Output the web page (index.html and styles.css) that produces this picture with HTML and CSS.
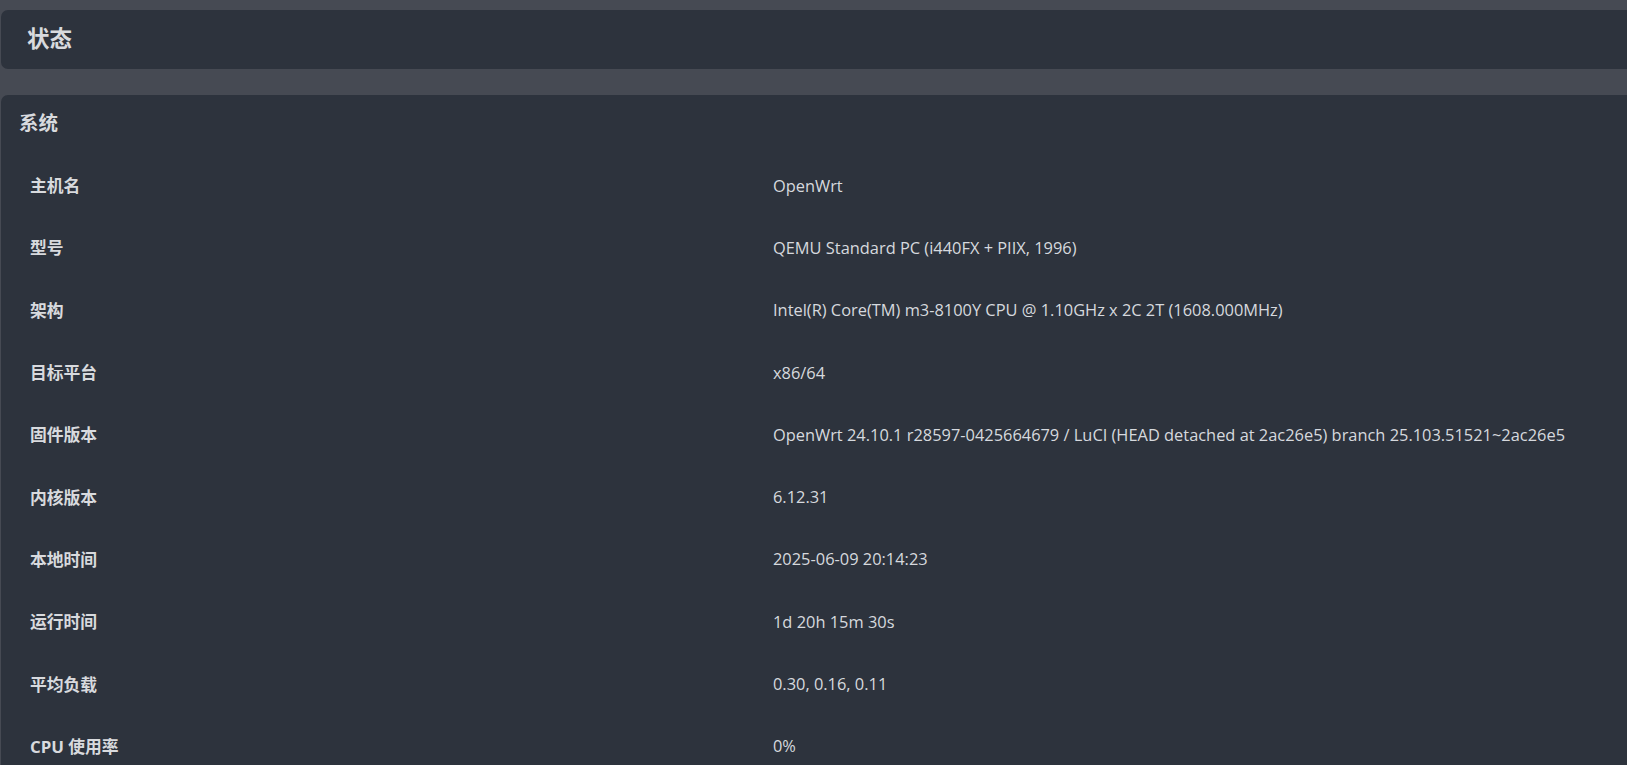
FILE: index.html
```html
<!DOCTYPE html>
<html lang="zh-CN">
<head>
<meta charset="utf-8">
<title>状态</title>
<link rel="stylesheet" href="styles.css">
</head>
<body>
<div class="page">
  <header class="title-card">
    <h2 class="title">状态</h2>
  </header>
  <section class="card">
    <h3 class="card-title">系统</h3>
    <div class="table">
      <div class="row"><div class="label">主机名</div><div class="value">OpenWrt</div></div>
      <div class="row"><div class="label">型号</div><div class="value">QEMU Standard PC (i440FX + PIIX, 1996)</div></div>
      <div class="row"><div class="label">架构</div><div class="value">Intel(R) Core(TM) m3-8100Y CPU @ 1.10GHz x 2C 2T (1608.000MHz)</div></div>
      <div class="row"><div class="label">目标平台</div><div class="value">x86/64</div></div>
      <div class="row"><div class="label">固件版本</div><div class="value">OpenWrt 24.10.1 r28597-0425664679 / LuCI (HEAD detached at 2ac26e5) branch 25.103.51521~2ac26e5</div></div>
      <div class="row"><div class="label">内核版本</div><div class="value">6.12.31</div></div>
      <div class="row"><div class="label">本地时间</div><div class="value">2025-06-09 20:14:23</div></div>
      <div class="row"><div class="label">运行时间</div><div class="value">1d 20h 15m 30s</div></div>
      <div class="row"><div class="label">平均负载</div><div class="value">0.30, 0.16, 0.11</div></div>
      <div class="row"><div class="label">CPU 使用率</div><div class="value">0%</div></div>
    </div>
  </section>
</div>
</body>
</html>
```

FILE: styles.css
```css
html, body {
  margin: 0;
  padding: 0;
  background: #464a53;
  height: 100%;
  overflow: hidden;
}

body {
  font-family: "Open Sans", "Noto Sans CJK SC", sans-serif;
  color: #d3d6da;
}

.page {
  padding: 10px 0 0 1px;
  display: flex;
  flex-direction: column;
  gap: 26px;
}

.title-card {
  background: #2d333d;
  border-radius: 7px 0 0 7px;
  height: 59px;
  display: flex;
  align-items: center;
  margin-right: -20px;
}

.title {
  margin: 0 0 5px 26px;
  font-size: 22.5px;
  font-weight: 700;
  color: #d8dade;
}

.card {
  background: #2d333d;
  border-radius: 7px 0 0 0;
  margin-right: -20px;
  min-height: 700px;
}

.card-title {
  margin: 0;
  padding: 14px 0 17px 18px;
  line-height: 28px;
  font-size: 19.5px;
  font-weight: 700;
  color: #d8dade;
}

.table {
  display: flex;
  flex-direction: column;
}

.row {
  display: grid;
  grid-template-columns: 743px 1fr;
  height: 62.3px;
  align-items: center;
  padding-left: 29px;
}

.label {
  font-size: 16.8px;
  font-weight: 700;
  color: #d8dade;
}

.value {
  font-size: 16.4px;
  color: #d6d9de;
  white-space: nowrap;
}
```
